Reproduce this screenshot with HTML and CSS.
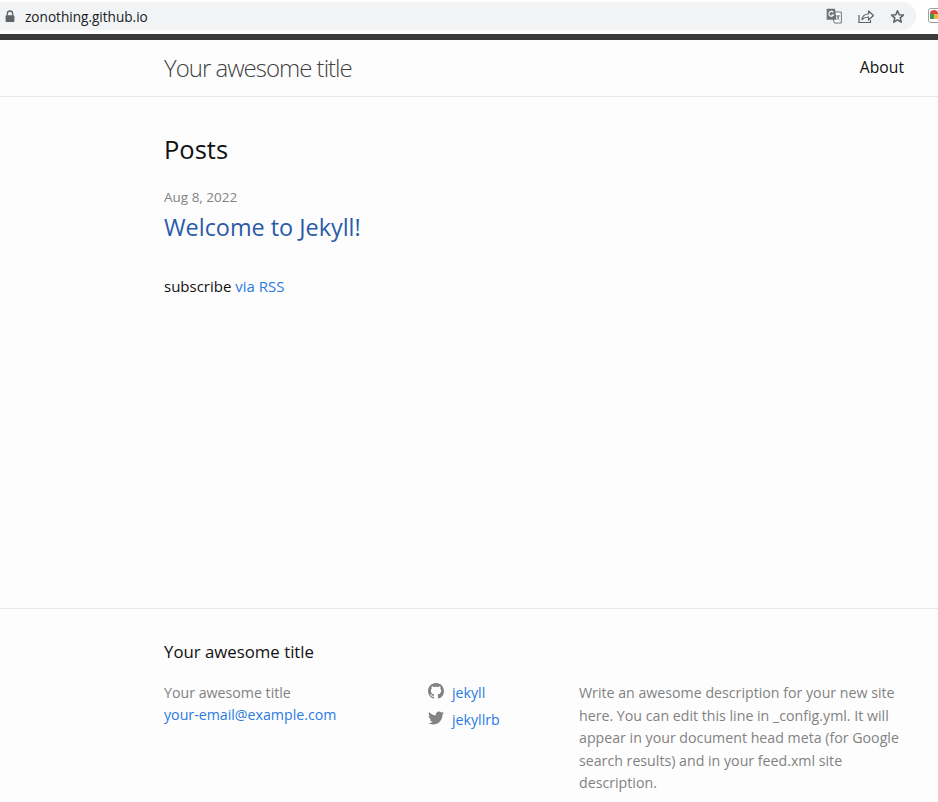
FILE: index.html
```html
<!DOCTYPE html>
<html lang="en">
<head>
<meta charset="utf-8">
<title>Your awesome title</title>
<link rel="stylesheet" href="styles.css">
</head>
<body>
<div class="chrome">
  <div class="omnibox">
    <svg class="lock" width="10" height="13" viewBox="0 0 10 13"><path d="M1.600 5.300h6.800c.6 0 1 .4 1 1v4.800c0 .6-.4 1-1 1H1.600c-.6 0-1-.4-1-1V6.300c0-.6.4-1 1-1z" fill="#5f6368"/><path d="M2.400 5.500V3.600a2.600 2.600 0 0 1 5.200 0v1.900" fill="none" stroke="#5f6368" stroke-width="1.300"/></svg>
    <span class="url">zonothing.github.io</span>
    <div class="omni-icons">
      <svg width="16" height="16" viewBox="0 0 16 16"><path d="M7 4h8.300v11H8.500L7.500 12z" fill="#fff" stroke="#6f7276"/><path d="M.7.700h8.300l1.500 11H.7z" fill="#6f7276"/><path d="M7.200 4.300A2.400 2.400 0 1 0 7.400 7H5.500" fill="none" stroke="#fff" stroke-width="1.100"/><path d="M10.300 7.800h3.600M11.200 8c.3 1.800 1 3 2.400 4.200M13 8c-.3 1.700-1 2.900-2.200 3.800" fill="none" stroke="#6f7276" stroke-width=".9"/></svg>
      <svg width="16" height="16" viewBox="0 0 16 16"><path d="M1 7v7.500h11.500V12" fill="none" stroke="#5f6368" stroke-width="1.200"/><path d="M4 11.500c.5-3.500 3-5.500 6.500-5.500V3l5 4.500-5 4.500V9c-2.500 0-4.700.7-6.500 2.500z" fill="none" stroke="#5f6368" stroke-width="1.200" stroke-linejoin="round"/></svg>
      <svg width="15" height="15" viewBox="0 0 15 15"><path d="M7.500 1.800l1.700 3.900 4.200.4-3.200 2.800 1 4.200-3.700-2.200-3.700 2.200 1-4.200L1.600 6.100l4.200-.4z" fill="none" stroke="#5f6368" stroke-width="1.600" stroke-linejoin="round"/></svg>
    </div>
  </div>
  <svg class="ext" width="10" height="16" viewBox="0 0 10 16"><rect x=".5" y=".5" width="14" height="14" rx="2.500" fill="#fff" stroke="#9a9da1"/><path d="M2 6a4 4 0 0 1 8 0z" fill="#d9483b"/><path d="M2 6h4v5H2z" fill="#3b9a4a"/><path d="M6 6h4v5H6z" fill="#e8b93c"/></svg>
</div>
<div class="dark-strip"></div>
<header class="site-header">
  <div class="wrapper header-row">
    <a class="site-title" href="#">Your awesome title</a>
    <a class="nav-link" href="#">About</a>
  </div>
</header>
<main class="content">
  <div class="wrapper">
    <h1 class="page-heading">Posts</h1>
    <div class="post-meta">Aug 8, 2022</div>
    <h3 class="post-title"><a href="#">Welcome to Jekyll!</a></h3>
    <p class="rss">subscribe <a href="#">via RSS</a></p>
  </div>
</main>
<footer class="site-footer">
  <div class="wrapper">
    <h2 class="footer-heading">Your awesome title</h2>
    <div class="footer-cols">
      <div class="col col-1">
        <div class="muted">Your awesome title</div>
        <a href="#">your-email@example.com</a>
      </div>
      <div class="col col-2">
        <div class="social">
          <svg class="sicon" viewBox="0 0 16 16"><path fill="#828282" d="M8 0C3.580 0 0 3.580 0 8c0 3.540 2.290 6.530 5.470 7.590.4.070.55-.17.55-.38 0-.19-.01-.82-.01-1.490-2.010.37-2.530-.49-2.690-.94-.09-.23-.48-.94-.82-1.130-.28-.15-.68-.52-.01-.53.63-.01 1.080.58 1.230.82.720 1.210 1.870.87 2.330.66.070-.52.280-.87.510-1.070-1.780-.2-3.640-.89-3.640-3.950 0-.87.310-1.590.820-2.150-.08-.2-.36-1.020.08-2.120 0 0 .67-.21 2.200.82.640-.18 1.320-.27 2-.27s1.360.09 2 .27c1.530-1.040 2.200-.82 2.200-.82.440 1.100.160 1.920.08 2.120.51.560.82 1.270.82 2.150 0 3.070-1.870 3.750-3.650 3.950.290.250.540.730.540 1.480 0 1.070-.01 1.930-.01 2.200 0 .21.150.46.550.38A8.010 8.010 0 0 0 16 8c0-4.420-3.580-8-8-8z"/></svg>
          <a class="social-link" href="#">jekyll</a>
        </div>
        <div class="social">
          <svg class="sicon" viewBox="0 0 16 16"><path fill="#828282" d="M15.969 3.058c-.586.260-1.217.436-1.878.515.675-.405 1.194-1.045 1.438-1.809-.632.375-1.332.647-2.076.793-.596-.636-1.446-1.033-2.387-1.033-1.806 0-3.270 1.464-3.270 3.270 0 .256.029.506.085.745-2.718-.136-5.127-1.438-6.741-3.417-.282.483-.443 1.045-.443 1.644 0 1.134.577 2.135 1.455 2.722-.536-.017-1.040-.164-1.481-.409v.041c0 1.584 1.127 2.906 2.623 3.206-.274.075-.564.115-.862.115-.211 0-.416-.020-.615-.059.416 1.299 1.624 2.245 3.055 2.271-1.119.877-2.529 1.400-4.061 1.400-.264 0-.524-.015-.780-.046 1.447.928 3.166 1.469 5.013 1.469 6.015 0 9.304-4.983 9.304-9.304 0-.142-.003-.283-.009-.423.639-.461 1.193-1.037 1.632-1.693z"/></svg>
          <a class="social-link" href="#">jekyllrb</a>
        </div>
      </div>
      <div class="col col-3 muted">Write an awesome description for your new site here. You can edit this line in _config.yml. It will appear in your document head meta (for Google search results) and in your feed.xml site description.</div>
    </div>
  </div>
</footer>
</body>
</html>
```
FILE: styles.css
```css
* { box-sizing: border-box; }
html, body { margin: 0; padding: 0; }
body {
  width: 938px;
  height: 802px;
  overflow: hidden;
  background: #fdfdfd;
  color: #111;
  font-family: "Open Sans", "Noto Sans", "Liberation Sans", sans-serif;
  font-size: 15px;
  display: flex;
  flex-direction: column;
}
a { color: #2a7ae2; text-decoration: none; }
h1, h2, h3, p { margin: 0; font-weight: 400; }

.chrome {
  height: 34px;
  background: #fff;
  display: flex;
  align-items: flex-start;
  padding-top: 2px;
  flex: none;
}
.omnibox {
  width: 916px;
  height: 28px;
  background: #f1f3f4;
  border-radius: 0 14px 14px 0;
  display: flex;
  align-items: center;
  padding-left: 5px;
}
.lock { flex: none; }
.url { margin-left: 10px; font-size: 13.600px; color: #202124; }
.omni-icons { margin-left: auto; margin-right: 11px; display: flex; gap: 16px; align-items: center; }
.ext { margin-left: 12px; margin-top: 6px; overflow: hidden; }
.dark-strip { height: 6px; background: #3c3c3c; flex: none; }

.wrapper { margin-left: 164px; width: 740px; }
.site-header {
  height: 57px;
  flex: none;
  border-bottom: 1px solid #e8e8e8;
}
.header-row { display: flex; justify-content: space-between; align-items: center; height: 54px; }
.site-title { font-size: 24px; font-weight: 300; letter-spacing: -1px; color: #424242; }
.nav-link { font-size: 15.700px; color: #111; }

.content { flex: 1; padding-top: 35px; }
.page-heading { font-size: 25.500px; line-height: 34px; color: #111; }
.post-meta { font-size: 13.500px; color: #828282; margin-top: 22px; line-height: 18px; }
.post-title { font-size: 23.400px; line-height: 30px; margin-top: 6px; }
.post-title a { color: #2a5ba8; }
.rss { margin-top: 33px; line-height: 22px; font-size: 15px; }

.site-footer { height: 194px; flex: none; border-top: 1px solid #e8e8e8; padding-top: 32px; }
.footer-heading { font-size: 16.800px; line-height: 22px; color: #111; }
.footer-cols { display: flex; margin-top: 19px; font-size: 14.200px; line-height: 22.500px; }
.col-1 { width: 264px; line-height: 22px; }
.col-2 { width: 151px; }
.col-3 { width: 325px; }
.muted { color: #828282; }
.social { display: flex; align-items: center; gap: 8px; height: 27px; margin-top: -5px; }
.social + .social { margin-top: 0; }
.social-link { position: relative; top: 3px; }
.sicon { width: 16px; height: 16px; flex: none; }
```
